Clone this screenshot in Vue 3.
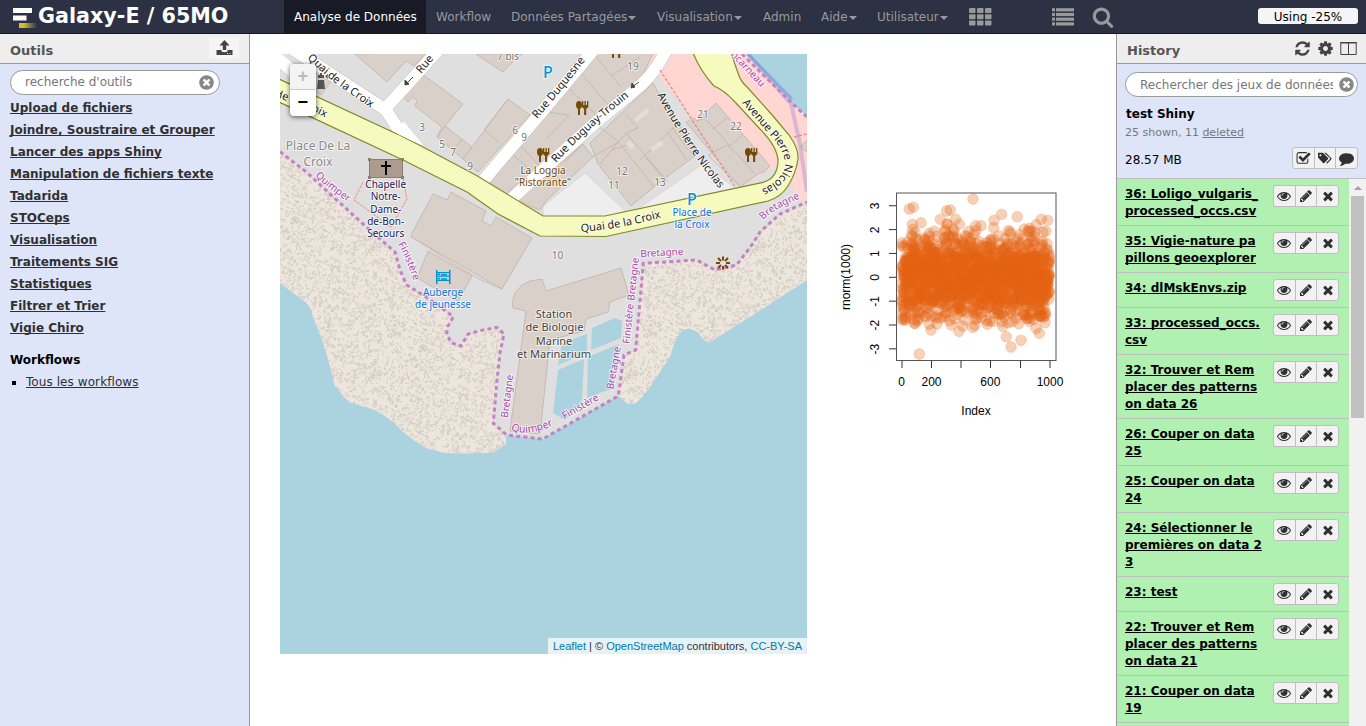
<script setup>
const ic = {
  eye: 'M1664 960q-152-236-381-353 61 104 61 225 0 185-131.5 316.5t-316.5 131.5-316.5-131.5-131.5-316.5q0-121 61-225-229 117-381 353 133 205 333.5 326.5t434.5 121.5 434.5-121.5 333.5-326.5zm-720-384q0-20-14-34t-34-14q-125 0-214.5 89.5t-89.5 214.5q0 20 14 34t34 14 34-14 14-34q0-86 61-147t147-61q20 0 34-14t14-34zm848 384q0 34-20 69-140 230-376.5 368.5t-499.5 138.5-499.5-139-376.5-368q-20-35-20-69t20-69q140-229 376.5-368t499.5-139 499.5 139 376.5 368q20 35 20 69z',
  pencil: 'M491 1536l91-91-235-235-91 91v107h128v128h107zm523-928q0-22-22-22-10 0-17 7l-542 542q-7 7-7 17 0 22 22 22 10 0 17-7l542-542q7-7 7-17zm-54-192l416 416-832 832h-416v-416zm683 96q0 53-37 90l-166 166-416-416 166-165q36-38 90-38 53 0 91 38l235 234q37 39 37 91z',
  times: 'M1490 1322q0 40-28 68l-136 136q-28 28-68 28t-68-28l-294-294-294 294q-28 28-68 28t-68-28l-136-136q-28-28-28-68t28-68l294-294-294-294q-28-28-28-68t28-68l136-136q28-28 68-28t68 28l294 294 294-294q28-28 68-28t68 28l136 136q28 28 28 68t-28 68l-294 294 294 294q28 28 28 68z',
  cog: 'M1152 896q0-106-75-181t-181-75-181 75-75 181 75 181 181 75 181-75 75-181zm512-109v222q0 12-8 23t-20 13l-185 28q-19 54-39 91 35 50 107 138 10 12 10 25t-9 23q-27 37-99 108t-94 71q-12 0-26-9l-138-108q-44 23-91 38-16 136-29 186-7 28-36 28h-222q-14 0-24.5-8.5t-11.5-21.5l-28-184q-49-16-90-37l-141 107q-10 9-25 9-14 0-25-11-126-114-165-168-7-10-7-23 0-12 8-23 15-21 51-66.5t54-70.5q-27-50-41-99l-183-27q-13-2-21-12.5t-8-23.5v-222q0-12 8-23t19-13l186-28q14-46 39-92-40-57-107-138-10-12-10-24 0-10 9-23 26-36 98.5-107.5t94.5-71.5q13 0 26 10l138 107q44-23 91-38 16-136 29-186 7-28 36-28h222q14 0 24.5 8.5t11.5 21.5l28 184q49 16 90 37l142-107q9-9 24-9 13 0 25 10 129 119 165 170 7 8 7 22 0 12-8 23-15 21-51 66.5t-54 70.5q26 50 41 98l183 28q13 2 21 12.5t8 23.5z',
  refresh: 'M1639 1056q0 5-1 7-64 268-268 434.5t-478 166.5q-146 0-282.5-55t-243.5-157l-129 129q-19 19-45 19t-45-19-19-45v-448q0-26 19-45t45-19h448q26 0 45 19t19 45-19 45l-137 137q71 66 161 102t187 36q134 0 250-65t186-179q11-17 53-117 8-23 30-23h192q13 0 22.5 9.5t9.5 22.5zm25-800v448q0 26-19 45t-45 19h-448q-26 0-45-19t-19-45 19-45l138-138q-148-137-349-137-134 0-250 65t-186 179q-11 17-53 117-8 23-30 23h-199q-13 0-22.5-9.5t-9.5-22.5v-7q65-268 270-434.5t480-166.5q146 0 284 55.5t245 156.5l130-129q19-19 45-19t45 19 19 45z',
  search: 'M1216 832q0-185-131.5-316.5t-316.5-131.5-316.5 131.5-131.5 316.5 131.5 316.5 316.5 131.5 316.5-131.5 131.5-316.5zm512 832q0 52-38 90t-90 38q-54 0-90-38l-343-342q-179 124-399 124-143 0-273.5-55.5t-225-150-150-225-55.5-273.5 55.5-273.5 150-225 225-150 273.5-55.5 273.5 55.5 225 150 150 225 55.5 273.5q0 220-124 399l343 343q37 37 37 90z',
  clear: 'M1277 1122q0-26-19-45l-181-181 181-181q19-19 19-45 0-27-19-46l-90-90q-19-19-46-19-26 0-45 19l-181 181-181-181q-19-19-45-19-27 0-46 19l-90 90q-19 19-19 46 0 26 19 45l181 181-181 181q-19 19-19 45 0 27 19 46l90 90q19 19 46 19 26 0 45-19l181-181 181 181q19 19 45 19 27 0 46-19l90-90q19-19 19-46zm387-226q0 209-103 385.5t-279.5 279.5-385.5 103-385.5-103-279.5-279.5-103-385.5 103-385.5 279.5-279.5 385.5-103 385.5 103 279.5 279.5 103 385.5z',
  comment: 'M1792 896q0 174-120 321.5t-326 233-450 85.5q-70 0-145-8-198 175-460 242-49 14-114 22-17 2-30.5-9t-17.5-29v-1q-3-4-.5-12t2-10 4.5-9.5l6-9 7-8.5 8-9q7-8 31-34.5t34.5-38 31-39.5 32.5-51 27-59 26-76q-157-89-247.5-220t-90.5-281q0-130 71-248.5t191-204.5 286-136.5 348-50.5q244 0 450 85.5t326 233 120 321.5z',
  check: 'M1472 930v318q0 119-84.5 203.5t-203.5 84.5h-832q-119 0-203.5-84.5t-84.5-203.5v-832q0-119 84.5-203.5t203.5-84.5h832q63 0 117 25 15 7 18 23 3 17-9 29l-49 49q-10 10-23 10-3 0-9-2-23-6-45-6h-832q-66 0-113 47t-47 113v832q0 66 47 113t113 47h832q66 0 113-47t47-113v-254q0-13 9-22l64-64q10-10 23-10 6 0 12 3 20 8 20 29zm231-489l-814 814q-24 24-57 24t-57-24l-430-430q-24-24-24-57t24-57l110-110q24-24 57-24t57 24l263 263 647-647q24-24 57-24t57 24l110 110q24 24 24 57t-24 57z',
  tags: 'M0 220h520q70 0 130 60l560 550q60 70 0 140l-460 460q-70 60-140 0L70 860q-70-70-70-140zM290 380a125 125 0 1 0 1 0zM730 220h150q70 0 130 60l590 580q50 70 0 130l-460 460q-50 50-110 20l-50-60 440-430q50-60 0-130z'
}

const nav = [
  { t: 'Analyse de Données', w: 142, on: true },
  { t: 'Workflow', w: 75 },
  { t: 'Données Partagées', w: 146, c: true },
  { t: 'Visualisation', w: 106, c: true },
  { t: 'Admin', w: 58 },
  { t: 'Aide', w: 56, c: true },
  { t: 'Utilisateur', w: 92, c: true }
]
const tools = ['Upload de fichiers', 'Joindre, Soustraire et Grouper', 'Lancer des apps Shiny', 'Manipulation de fichiers texte', 'Tadarida', 'STOCeps', 'Visualisation', 'Traitements SIG', 'Statistiques', 'Filtrer et Trier', 'Vigie Chiro']
const items = [
  ['36: Loligo_vulgaris_', 'processed_occs.csv'],
  ['35: Vigie-nature pa', 'pillons geoexplorer'],
  ['34: dlMskEnvs.zip'],
  ['33: processed_occs.', 'csv'],
  ['32: Trouver et Rem', 'placer des patterns', 'on data 26'],
  ['26: Couper on data', '25'],
  ['25: Couper on data', '24'],
  ['24: Sélectionner le', 'premières on data 2', '3'],
  ['23: test'],
  ['22: Trouver et Rem', 'placer des patterns', 'on data 21'],
  ['21: Couper on data', '19']
]

let seed = 20177
const rnd = () => {
  seed = (seed * 1664525 + 1013904223) % 4294967296
  return seed / 4294967296
}
const f1 = n => n.toFixed(1)

// short curved strokes of the beach pattern
let sand = ''
for (let i = 0; i < 1700; i++) {
  const x = rnd() * 128, y = rnd() * 128, a = rnd() * Math.PI
  const dx = Math.cos(a) * 1.4, dy = Math.sin(a) * 1.4
  sand += `M${f1(x)} ${f1(y)}q${f1(dx + dy * .4)} ${f1(dy - dx * .4)} ${f1(dx * 2)} ${f1(dy * 2)}`
}

// samples of the normal distribution, with the extreme ones listed by position
const pts = []
for (let i = 0; i < 1400; i++) {
  let z
  do { z = .92 * Math.sqrt(-2 * Math.log(rnd() + 1e-9)) * Math.cos(2 * Math.PI * rnd()) } while (z > 2.05 || z < -1.9)
  pts.push([f1(901.8 + i * .1057), f1(277.3 - z * 23.85)])
}
const far = [[429, 57], [238, 87], [250, 82], [350, 93], [361, 90], [247, 133], [273, 128], [331, 118], [351, 132], [353, 133], [377, 118], [388, 133], [515, 103], [492, 121], [491, 143], [562, 110], [634, 118], [653, 121], [619, 134], [598, 145], [437, 138], [453, 137], [370, 148], [313, 154], [535, 152], [268, 522], [543, 501], [529, 470], [573, 481], [628, 460], [618, 445], [645, 428], [518, 439], [303, 450], [298, 433], [321, 432], [253, 430], [255, 430], [364, 435], [387, 454], [398, 438], [428, 442], [435, 436], [472, 433], [215, 419], [286, 410], [566, 431], [598, 424], [534, 428], [216, 189]]
for (const [x, y] of far) pts.push([f1(830 + x / 3), f1(180 + y / 3)])

const yt = [3, 2, 1, 0, -1, -2, -3]
const labels = [
  // text, x, y, size, colour, rotation
  ['7 bis', 508, 60, 10, '#777', 0], ['3', 422, 131, 10, '#777', 0], ['5', 442, 148, 10, '#777', 0], ['7', 453, 156, 10, '#777', 0], ['9', 470, 170, 10, '#777', 0],
  ['6', 515, 134, 10, '#777', 0], ['9', 524, 141, 10, '#777', 0], ['19', 633, 70, 10, '#777', 0], ['21', 703, 118, 10, '#777', 0], ['22', 736, 130, 10, '#777', 0],
  ['12', 622, 175, 10, '#777', 0], ['11', 614, 189, 10, '#777', 0], ['13', 660, 186, 10, '#777', 0], ['10', 557.5, 259, 10, '#777', 0],
  ['Place De La', 318, 150, 12, '#888', 0], ['Croix', 318, 166, 12, '#888', 0],
  ['Chapelle', 385.7, 188, 10, '#1b1b5c', 0], ['Notre-', 385.7, 200.3, 10, '#1b1b5c', 0], ['Dame-', 385.7, 212.6, 10, '#1b1b5c', 0], ['de-Bon-', 385.7, 224.8, 10, '#1b1b5c', 0], ['Secours', 385.7, 237, 10, '#1b1b5c', 0],
  ['La Loggia', 543, 174, 10, '#734a08', 0], ['"Ristorante"', 543, 186, 10, '#734a08', 0],
  ['Place de', 692, 216, 10, '#0a72e8', 0], ['la Croix', 692, 228, 10, '#0a72e8', 0],
  ['Auberge', 443, 296, 10, '#0a72e8', 0], ['de jeunesse', 443, 308, 10, '#0a72e8', 0],
  ['Station', 554, 317.5, 11, '#444', 0], ['de Biologie', 554.5, 331, 11, '#444', 0], ['Marine', 554, 344.5, 11, '#444', 0], ['et Marinarium', 554, 358, 11, '#444', 0],
  ['Bretagne', 662, 256, 10, '#ac46ac', -3], ['Bretagne', 510.5, 396.5, 10, '#ac46ac', -83], ['Bretagne', 636.5, 279.5, 10, '#ac46ac', -84], ['Finistère', 631.5, 324, 10, '#ac46ac', -84],
  ['Bretagne', 617, 368.5, 10, '#ac46ac', -80], ['Finistère', 582, 409.5, 10, '#ac46ac', -30]
]
const pIcons = [[548, 77.5], [692, 204.5]]
const paths = [
  ['q1', 'M307 58Q318 69 329 78T380 114', 'Quai de la Croix', '#222', 11],
  ['q2', 'M275 97Q302 105 340 125', 'de la Croix', '#222', 11],
  ['q3', 'M421 74L444 47', 'Rue', '#222', 11],
  ['q4', 'M537 119Q566 86 590 54', 'Rue Duquesne', '#222', 11],
  ['q5', 'M556 163Q588 128 636 91', 'Rue Duguay-Trouin', '#222', 11],
  ['q6', 'M657 95Q686 148 722 192', 'Avenue Pierre Nicolas', '#222', 11],
  ['q7', 'M742 103L769 134Q785 150 785 165 784 180 758 191', 'Avenue Pierre Nicolas', '#222', 11],
  ['q8', 'M581 232Q622 229 670 215', 'Quai de la Croix', '#222', 11],
  ['q9', 'M315 176Q330 190 355 207', 'Quimper', '#ac46ac', 10],
  ['q10', 'M398 244Q408 262 417 290', 'Finistère', '#ac46ac', 10],
  ['q11', 'M722 46L769 96', 'Concarneau', '#ac46ac', 10],
  ['q12', 'M763 220Q776 207 806 196', 'Bretagne', '#ac46ac', 10],
  ['q13', 'M511 430Q530 438 560 422', 'Quimper', '#ac46ac', 10.5]
]
const dots = 'M280 151.7L306.7 172.3 333 196.7 365 225.7 395 252 400 270 406.7 285 426.7 297.3 443.3 309.3 453.3 316.7 448 326 446.7 333 451 342.7 460.7 346 468.3 334 480 330.7 496.7 327.3 504 334 500 353 496.7 383 493.3 423.3 506.7 435 542.7 439 618.3 396 624 355 635.7 350 643.3 263.3 696.7 260 715 270 736.7 265 753.3 243 760 232 780 214 807 202'
const builds = [
  '355,54 387,82 406,61 414,66 427,52', '315,66 332,80 321,95 313,90', '418,71 463,104 445,126 472,147 463,159 437,137 442,127 415,106 417,101 413,97 408,102 403,97',
  '463,159 508,99 530,115 478,172', '484,178 593,50 655,50 640,80 505,195', '517,201 583,144 593,157 547,200 540,210', '590,143 653,83 658,92 698,153 688,161 660,182 631,206 598,164',
  '686,122 694,118 697,121 716,103 770,166 764,172 758,174 740,187', '800,147 807,140 807,152', '476,54 503,72 512,62 522,54', '433,194 447,200 451,192 486,211 482,221 491,226 496,217 532,238 502,289 411,237 412,233',
  '428,251 472,276 458,301 417,278', '513,308 512,303 515,293 522,285 530,281 542,279 546,291 621,268 629,295 610,302 608,312 586,319 584,331 550,340 540,434 510,431 526,311'
]
const inner = 'M445 126L437 137M462 139L455 149M484 130L499 142M508 99L484 130M520 145L540 166M513 155L528 168M560 80L604 122M533 110L569 115 545 140M580 72L608 105M594 54L621 87M611 76L640 57M565 162L583 144M594 123L619 142 592 157M626 115L638 128 626 133 668 182M626 133L600 164M668 133L687 160M668 133L640 160M668 133L674 127M620 144L654 187M646 158L665 180M672 127L685 145 695 157M703 117L716 130 730 146M713 129L727 118M730 146L743 134M709 155L727 145 740 157 755 174M708 155L740 187M611 150L631 144M697 121L706 118M432 249L421 243M430 249L479 279 502 289'
</script>

<template>
  <div class="app">
    <header class="mast">
      <div class="brand">
        <svg width="26" height="22" viewBox="0 0 26 22"><defs><linearGradient id="gold"><stop offset="0" stop-color="#d4c02c" /><stop offset=".25" stop-color="#d4c02c" /><stop offset="1" stop-color="#d4c02c" stop-opacity="0" /></linearGradient></defs><path fill="#fff" d="M1 1h19v5H1zM1 8.500h13.500v5H1z" /><path fill="url(#gold)" d="M7 16h18v5H7z" /></svg>
        <span>Galaxy-E / 65MO</span>
      </div>
      <nav>
        <a v-for="n in nav" :key="n.t" :class="{ on: n.on }" :style="{ width: n.w + 'px' }">{{ n.t }}<i v-if="n.c" class="caret"></i></a>
      </nav>
      <svg class="mi" width="124" height="33" viewBox="0 0 124 33" fill="#999">
        <template v-for="r in 3" :key="r"><rect v-for="c in 3" :key="c" :x="1 + (c - 1) * 8" :y="1.700 + r * 6.300" width="6.500" height="5" rx="1" /></template>
        <template v-for="r in 4" :key="'l' + r"><rect x="84" :y="3.500 + r * 4.700" width="3" height="3.200" /><rect x="88" :y="3.500 + r * 4.700" width="18" height="3.200" /></template>
      </svg>
      <svg class="find" width="22" height="22" viewBox="0 0 1792 1792"><path :d="ic.search" /></svg>
      <div class="quota">Using -25%</div>
    </header>
    <main>
      <aside class="left">
        <div class="head"><b>Outils</b>
          <span class="up"><svg width="17" height="16" viewBox="0 0 17 16" fill="#444"><path d="M8.500 0l5 5.500h-3.300V10H6.800V5.500H3.500z" /><path d="M.5 10h5v1.500q3 1.500 6 0V10h5v4.500q0 .5-.5.500H1q-.5 0-.5-.5z" /><path fill="#eee" d="M11 13h1v1h-1zM13.500 13h1v1h-1z" /></svg></span>
        </div>
        <div class="search"><span>recherche d'outils</span><svg width="17" height="17" viewBox="0 0 1792 1792"><path :d="ic.clear" /></svg></div>
        <a v-for="t in tools" :key="t" class="tool">{{ t }}</a>
        <h4>Workflows</h4>
        <div class="wf"><i></i><a>Tous les workflows</a></div>
      </aside>

      <section class="center">
        <div class="map">
          <svg class="mapsvg" width="527" height="600" viewBox="280 54 527 600">
            <defs>
              <pattern id="sand" width="128" height="128" patternUnits="userSpaceOnUse"><rect width="128" height="128" fill="#eee5dc" /><path :d="sand" fill="none" stroke="#cfccc4" stroke-width="1" /></pattern>
              <path v-for="p in paths" :id="p[0]" :key="p[0]" :d="p[1]" />
            </defs>
            <rect x="280" y="54" width="527" height="600" fill="#aad3df" />
            <path :d="dots + 'V117L795 106 746 54H280z'" fill="#dfdfdf" />
            <path d="M280 151.700L306.700 172.300 333 196.700 365 225.700 395 252 400 270 406.700 285 426.700 297.300 443.300 309.300 453.300 316.700 448 326 446.700 333 451 342.700 460.700 346 468.300 334 480 330.700 496.700 327.300 504 334 500 353 493.300 423.300 506 435V444L493 452.700 460 453.700 443 452.700 423 447 403 432Q393 420 375 410L348 401.700 335 386 330 366.700Q323 340 313 317 311 304 300 298L280 283.300z" fill="url(#sand)" />
            <path d="M618.300 396L624 355 635.700 350 643.300 263.300 696.700 260 715 270 736.700 265 753.300 243 760 232 780 214 807 202V280L753 315 709 342.700 704 340 697 332Q688 325 680 333 674 341 670 357L650 387Q640 401 634 404H628z" fill="url(#sand)" />
            <path fill="#ffd6d1" d="M641 54H746L795 106 807 117V205L774 167 740 187 686 110z" />
            <path fill="#eee" stroke="#d6c6c4" stroke-width=".5" d="M543 206L585 173 625 211 606 217H543zM638 209L703 164 735 188z" />
            <path fill="#aad3df" d="M592 328L615 318 622 321 621 338 591 350zM562 343L587 334V353L558 365zM558 370L584 359 582 402 565 420 553 413zM588 357L619 344 613 388 587 398z" />
            <g fill="#d9d0c9" stroke="#c1b3a7" stroke-width=".8"><polygon v-for="b in builds" :key="b" :points="b" /><path fill="none" :d="inner" /></g>
            <path fill="#dfdfdf" d="M634 119L647 108 650 112 637 122zM650 148L661 140 664 144 653 152zM626 144L630 140 635 146 631 150z" />
            <path fill="none" stroke="#c3c3c3" stroke-width="13" d="M291 48L340 80 386 110 412 150M384 110L442 46M482 182L545 108 595 48M508 202L543 170 594 124 640 86Q656 72 666 50" />
            <path fill="none" stroke="#fff" stroke-width="12" d="M291 48L340 80 386 110 412 150M384 110L442 46M482 182L545 108 595 48M508 202L543 170 594 124 640 86Q656 72 666 50M276 57L300 77" />
            <path fill="#f7fabf" stroke="#7d8b2a" stroke-width="1.200" d="M279 79L397 134 423 147 477 175.700 543 216H605L763 182.300Q778 178 778 160 777 146 760 129L735 102Q724 90 714 86 701 72 693 53H731L738 73Q740 81 748 88L773 116 789 135Q799 149 798 159 796 173 788 186 781 197 768 201L606 236.500 540 236 498 214 467 192 403 160 279 102z" />
            <path fill="#fff" d="M390 128l14-6 20 24-26-12z" /><path fill="#f7fabf" d="M398 135l-5 2 20 10 6-1z" />
            <path fill="none" stroke="#f77d72" stroke-width="1.200" stroke-dasharray="3 2" d="M660 70L736 188M794 137L807 134" />
            <path fill="none" stroke="#f08a7c" stroke-dasharray="3 1" d="M363 182L354 200 391 227 407 199 403 178" />
            <path fill="none" stroke="#b090d0" stroke-opacity=".45" stroke-width="4" d="M748 54L791 104 800 144 807 192" />
            <path fill="none" stroke="#6b9bd8" stroke-opacity=".6" stroke-width="3" d="M748 54L792 99" />
            <path fill="none" stroke="#c482c4" stroke-width="3" stroke-dasharray="4 3.200" :d="dots + 'M742 54L794 105 807 117'" />
            <g><path fill="#ac9b8e" stroke="#8b7d72" d="M369.500 159.500h33v18h-33z" /><path fill="#8b7d72" d="M368 158h3v3h-3zM401 158h3v3h-3zM368 176h3v3h-3zM401 176h3v3h-3z" /><path d="M385 161h2v4h4v2h-4v8h-2v-8h-4v-2h4z" /></g>
            <g fill="#734a08">
              <g v-for="p in [[582, 108], [543, 155], [751, 155], [616, 51]]" :key="p[0]" :transform="`translate(${p[0]} ${p[1]})`"><ellipse cx="-3" cy="-3" rx="3" ry="4" /><path d="M-4 0h2v7h-2zM0 -7h1.300v4h1.200v-4h1.300v4H5v-4h1.300v6L4.200 1v6H2.100V1L0-1z" /></g>
              <path stroke="#734a08" stroke-width="2" d="M723 256.500v4M723 266v3.500M716 263h4M726 263h4M718 258l3 3M725 265l3 3M728 258l-3 3M718 268l3-3" />
            </g>
            <path fill="#0092da" d="M436 270h1.500v2H449v-2h1.500v14H449v-3H437.500v3H436zM437.500 273.300v2.200H449v-2.200zM437.500 276.800v3H449v-3z" /><path fill="#0092da" d="M438 273.500h2v1.500h-2zM441 274h6v1.500h-6zM438 277.800h2v1.500h-2zM441 278.300h6v1.500h-6z" />
            <path fill="#555" d="M318 80h6l1 9h-8zM318 75h6v3h-6zM320 73h2v2h-2zM325 76l3-2v5z" />
            <path stroke="#444" fill="#444" d="M413 77l-7 7M405 85v-5l4 4zM639 82l-7 5M631 88l1-5 3 4z" />
            <g class="halo" font-family="'Noto Sans', sans-serif">
              <text v-for="(l, i) in labels" :key="i" :x="l[1]" :y="l[2]" :font-size="l[3]" :fill="l[4]" text-anchor="middle" :transform="l[5] ? `rotate(${l[5]} ${l[1]} ${l[2]})` : null">{{ l[0] }}</text>
              <text v-for="p in paths" :key="p[0]" :fill="p[3]" :font-size="p[4]"><textPath :href="'#' + p[0]">{{ p[2] }}</textPath></text>
              <text v-for="p in pIcons" :key="p[0]" :x="p[0]" :y="p[1]" font-size="16" font-weight="500" fill="#0092da" text-anchor="middle">P</text>
            </g>
          </svg>
          <div class="zoom"><span class="off">+</span><span>−</span></div>
          <div class="attr"><a>Leaflet</a> | © <a>OpenStreetMap</a> contributors, <a>CC-BY-SA</a></div>
        </div>
        <svg class="plot" width="250" height="260" viewBox="830 170 250 260">
          <g fill="#e66414" fill-opacity=".3" stroke="#e66414" stroke-opacity=".3" stroke-width=".6"><circle v-for="(p, i) in pts" :key="i" :cx="p[0]" :cy="p[1]" r="5.400" /></g>
          <g fill="none" stroke="#333">
            <rect x="896.500" y="193" width="159.500" height="167.500" stroke="#555" />
            <path d="M902 360.500v7.500M931.500 360.500v7.500M961 360.500v7.500M990.500 360.500v7.500M1020.500 360.500v7.500M1050 360.500v7.500" />
            <path v-for="v in yt" :key="v" :d="`M889 ${277.3 - v * 23.85}h7.500`" />
          </g>
          <g font-family="'Liberation Sans', Arial, sans-serif" font-size="12" text-anchor="middle">
            <text x="901.500" y="386">0</text><text x="931.500" y="386">200</text><text x="990.300" y="386">600</text><text x="1050" y="386">1000</text><text x="976" y="415">Index</text>
            <text v-for="v in yt" :key="v" :transform="`translate(879 ${277.5 - v * 23.85}) rotate(-90)`">{{ v }}</text>
            <text transform="translate(850 277) rotate(-90)">rnorm(1000)</text>
          </g>
        </svg>
      </section>

      <aside class="right">
        <div class="head"><b>History</b>
          <span class="acts"><svg width="17" height="17" viewBox="0 0 1792 1792"><path :d="ic.refresh" /></svg><svg width="17" height="17" viewBox="0 0 1792 1792"><path :d="ic.cog" /></svg><svg width="17" height="15" viewBox="0 0 17 15"><path fill="none" stroke="#444" d="M.8 1.500h15.400v12H.8zM8.500 1.500v12M.8 1.500h15.400" /><path d="M.5 1h16v1.500H.5z" /></svg></span>
        </div>
        <div class="search hs"><span>Rechercher des jeux de données</span><svg width="17" height="17" viewBox="0 0 1792 1792"><path :d="ic.clear" /></svg></div>
        <div class="hname">test Shiny</div>
        <div class="hsub">25 shown, 11 <u>deleted</u></div>
        <div class="hrow"><span>28.57 MB</span>
          <div class="btns"><i v-for="k in ['check', 'tags', 'comment']" :key="k"><svg width="15" height="15" viewBox="0 0 1792 1792"><path fill-rule="evenodd" :d="ic[k]" /></svg></i></div>
        </div>
        <div class="list">
          <div class="items">
            <div v-for="it in items" :key="it[0]" class="item">
              <a><template v-for="(l, i) in it" :key="i"><br v-if="i">{{ l }}</template></a>
              <div class="btns"><i v-for="k in ['eye', 'pencil', 'times']" :key="k"><svg width="14" height="14" viewBox="0 0 1792 1792"><path :d="ic[k]" /></svg></i></div>
            </div>
            <div class="item more"></div>
          </div>
          <div class="bar"><i class="tri"></i><div class="thumb"></div></div>
        </div>
      </aside>
    </main>
  </div>
</template>

<style>
body { margin: 0; overflow: hidden; background: #fff; }
</style>
<style scoped>
* { box-sizing: border-box; }
.app { width: 1366px; height: 726px; overflow: hidden; font: 12px/17px Verdana, "DejaVu Sans", sans-serif; color: #000; display: flex; flex-direction: column; text-decoration-skip-ink: none; }
.mast { height: 34px; flex: none; background: #2c3143; border-bottom: 1px solid #1a1525; display: flex; align-items: flex-start; }
.brand { width: 284px; flex: none; display: flex; align-items: center; padding: 0 0 0 12px; height: 33px; color: #fff; font-weight: bold; font-size: 20.7px; white-space: nowrap; }
.brand svg { flex: none; margin-top: 2px; }
.brand span { line-height: 32px; margin-top: -2px; }
nav { display: flex; }
nav a { color: #999; line-height: 34px; height: 33px; padding-left: 10px; white-space: nowrap; }
nav a.on { background: #181b25; color: #fff; }
.caret { display: inline-block; border: 4px solid transparent; border-top-color: #999; border-bottom: 0; vertical-align: middle; margin-left: 1px; }
.mi { margin-left: 9px; flex: none; }
.find { fill: #999; margin-top: 6px; }
.quota { margin: 8px 8px 0 auto; width: 100px; height: 16px; line-height: 18px; text-align: center; background: #f5f5f5; border-radius: 3px; }
main { flex: 1; display: flex; min-height: 0; }
aside { width: 250px; background: #dfe5f9; flex: none; display: flex; flex-direction: column; }
.left { border-right: 1px solid #999; }
.right { border-left: 1px solid #999; overflow: hidden; }
.head { height: 30px; flex: none; background: #eee; border-bottom: 1px solid #999; display: flex; justify-content: space-between; padding: 0 10px; color: #555; font-size: 13px; }
.head b { margin-top: 8px; line-height: 17px; }
.up { width: 30px; height: 21px; margin-top: 4px; background: #f5f5f5; border-radius: 3px; display: flex; justify-content: center; padding-top: 2px; }
.search { flex: none; margin: 6px 0 0 10px; width: 210px; height: 25px; border: 1px solid #999; border-radius: 13px; background: #fff; display: flex; align-items: center; justify-content: space-between; padding: 0 4px 0 14px; color: #777; white-space: nowrap; }
.search span { overflow: hidden; }
.search svg { fill: #888; flex: none; }
.hs { width: 233px; margin: 8px 0 0 8px; padding-right: 2px; }
.hs span { width: 193px; padding-top: 1px; }
.tool { margin: 5px 0 0 10px; height: 17px; line-height: 17px; font-weight: bold; color: #303030; text-decoration: underline; white-space: nowrap; }
h4 { margin: 15px 0 0 10px; font-size: 12px; line-height: 17px; }
.wf { display: flex; align-items: center; margin: 5px 0 0 12px; }
.wf i { width: 4px; height: 4px; background: #000; margin-right: 10px; }
.wf a { text-decoration: underline; color: #303030; letter-spacing: .08px; }
.center { flex: 1; display: flex; align-items: flex-start; }
.map { position: relative; width: 527px; height: 600px; margin: 20px 0 0 30px; flex: none; }
.mapsvg { display: block; }
.halo text { paint-order: stroke; stroke: #fff; stroke-opacity: .65; stroke-width: 2px; stroke-linejoin: round; }
.zoom { position: absolute; left: 10px; top: 10px; width: 26px; height: 52px; background: #fff; border-radius: 4px; box-shadow: 0 1px 5px rgba(0, 0, 0, .65); overflow: hidden; font: bold 18px/26px "Liberation Mono", monospace; text-align: center; }
.zoom span { display: block; height: 26px; }
.zoom .off { background: #f4f4f4; color: #bbb; border-bottom: 1px solid #ccc; }
.attr { position: absolute; right: 0; bottom: 0; height: 16px; padding: 0 5px; background: rgba(255, 255, 255, .7); font: 11px/16px "Liberation Sans", Arial, sans-serif; color: #333; white-space: nowrap; }
.attr a { color: #0078a8; }
.plot { margin: 136px 0 0 23px; flex: none; }
.acts { display: flex; align-items: center; gap: 6px; fill: #444; margin-right: -1px; }
.hname { margin: 9px 0 0 9px; font-weight: bold; font-size: 12px; line-height: 17px; }
.hsub { margin-left: 8px; font-size: 11px; color: #777; line-height: 18px; padding-top: 1px; height: 18px; }
.hrow { display: flex; justify-content: space-between; margin: 6px 8px 0 8px; line-height: 26px; height: 31px; flex: none; }
.btns { width: 66px; height: 22px; flex: none; display: flex; background: #f2f2f2; border: 1px solid #bfbfbf; border-radius: 3px; }
.btns i { flex: 1; display: flex; align-items: center; justify-content: center; fill: #303030; }
.btns i + i { border-left: 1px solid #bfbfbf; }
.list { flex: 1; min-height: 0; border-top: 1px solid #bfbfbf; display: flex; }
.items { width: 232px; overflow: hidden; }
.item { display: flex; justify-content: space-between; background: #b0f0b0; border-bottom: 1px solid #bfbfbf; padding: 6px 10px 5px 8px; font-weight: bold; white-space: nowrap; }
.item a { text-decoration: underline; padding-top: 1px; }
.item .btns { margin-bottom: 1px; }
.more { height: 47px; }
.bar { width: 17px; background: #f1f1f1; display: flex; flex-direction: column; align-items: center; }
.tri { border: 4px solid transparent; border-top: 0; border-bottom-color: #a3a3a3; margin-top: 7px; }
.thumb { width: 13px; height: 222px; background: #c1c1c1; margin-top: 6px; }
</style>
